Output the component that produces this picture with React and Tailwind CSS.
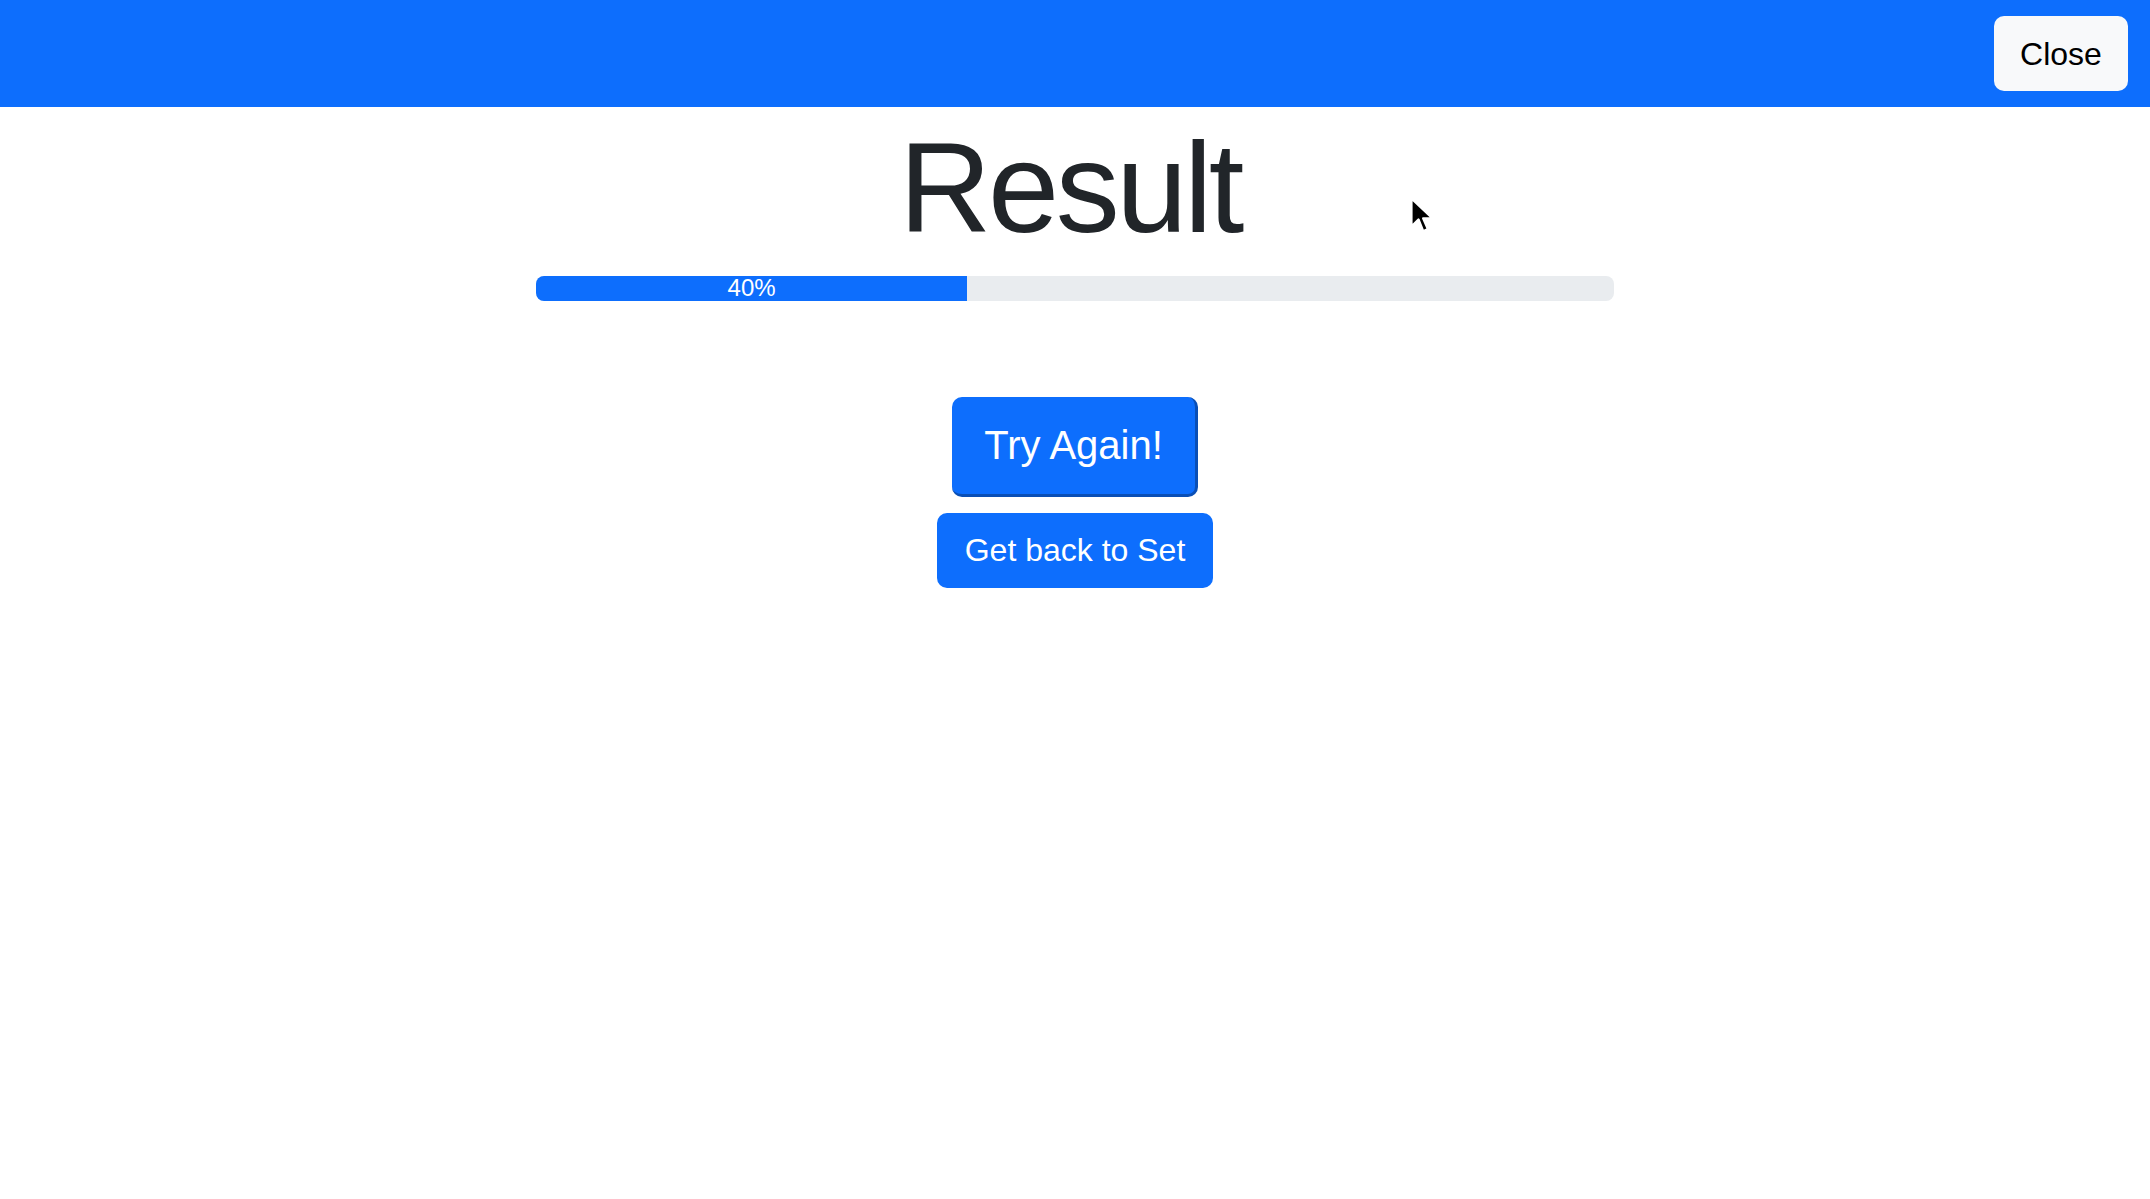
import React from 'react';

const Cursor = () => (
  <svg
    className="absolute left-[1409px] top-[196px]"
    width="26"
    height="40"
    viewBox="0 0 22 34"
  >
    <path
      d="M2 2 L2 26 L8 20 L12 30 L16 28 L12 19 L20 19 Z"
      fill="#000"
      stroke="#fff"
      strokeWidth="2"
      strokeLinejoin="round"
    />
  </svg>
);

const App = () => {
  const score = 40;

  return (
    <div className="relative min-h-screen w-full bg-white font-['Liberation_Sans',Arial,sans-serif]">
      <header className="flex h-[107px] w-full items-center justify-end bg-[#0d6efd] pr-[22px]">
        <button className="flex h-[75px] w-[134px] items-center justify-center rounded-[10px] bg-[#f8f9fa] text-[32px] text-black">
          Close
        </button>
      </header>

      <main className="flex flex-col items-center">
        <h1 className="mt-[4px] pr-[10px] text-[128px] leading-[1.2] tracking-[-3.5px] text-[#212529]">
          Result
        </h1>

        <div className="mt-[11px] flex h-[25px] w-[1078px] overflow-hidden rounded-[8px] bg-[#e9ecef]">
          <div
            className="flex h-full items-center justify-center bg-[#0d6efd] text-[24px] leading-none text-white"
            style={{ width: `${score}%` }}
          >
            {score}%
          </div>
        </div>

        <button className="mt-[96px] flex h-[100px] w-[246px] items-center justify-center rounded-[10px] border-r-[3px] border-b-[3px] border-[#0a4fb5] bg-[#0d6efd] text-[40px] text-white">
          Try Again!
        </button>

        <button className="mt-[16px] flex h-[75px] w-[276px] items-center justify-center rounded-[10px] bg-[#0d6efd] text-[32px] text-white">
          Get back to Set
        </button>
      </main>

      <Cursor />
    </div>
  );
};

export default App;
